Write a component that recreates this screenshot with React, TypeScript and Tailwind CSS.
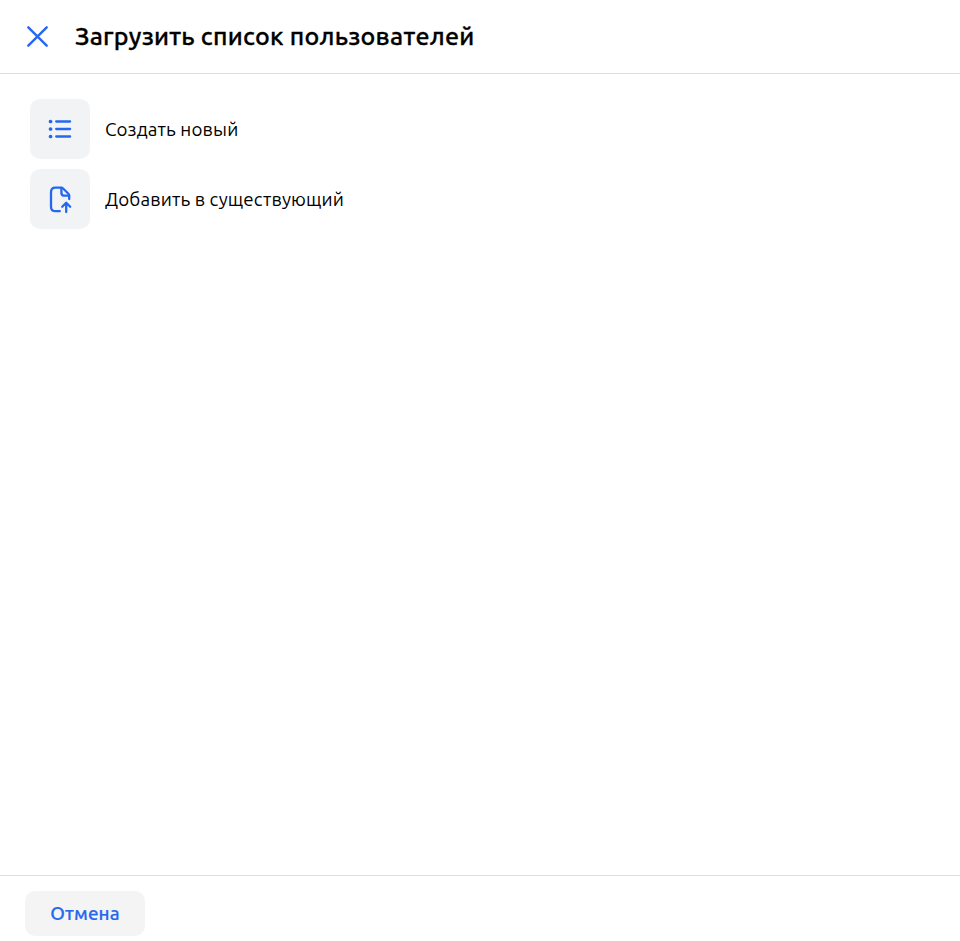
import React from "react";

export default function App() {
  return (
    <div className="flex h-screen flex-col bg-white font-['Ubuntu','Noto_Sans',sans-serif] text-black">
      <header className="flex h-[74px] shrink-0 items-center border-b border-[#dedede] pl-[25px]">
        <svg width="25" height="25" viewBox="0 0 25 25" fill="none" stroke="#2668ed" strokeWidth="2.4" strokeLinecap="round">
          <path d="M3.3 3.3l18.4 18.4M21.7 3.3L3.3 21.7" />
        </svg>
        <h1 className="ml-[25px] whitespace-nowrap text-[25px] font-medium tracking-[0.24px] [-webkit-text-stroke:0.3px_black]">
          Загрузить список пользователей
        </h1>
      </header>
      <main className="flex flex-1 flex-col gap-2.5 px-[30px] pt-[25px]">
        <button className="flex items-center gap-[15px] text-[18.75px] tracking-[0.14px]">
          <span className="flex size-[60px] items-center justify-center rounded-[10px] bg-[#f1f3f5]">
            <svg width="30" height="30" viewBox="0 0 30 30" fill="none" stroke="#2668ed" strokeWidth="2.3" strokeLinecap="round">
              <path d="M11.2 7.5h13.9M11.2 15h13.9M11.2 22.5h13.9" />
              <path d="M5.5 7.5h.1M5.5 15h.1M5.5 22.5h.1" strokeWidth="3.7" />
            </svg>
          </span>
          <span className="pt-0.5">Создать новый</span>
        </button>
        <button className="flex items-center gap-[15px] text-[18.75px] tracking-[0.14px]">
          <span className="flex size-[60px] items-center justify-center rounded-[10px] bg-[#f1f3f5]">
            <svg width="30" height="30" viewBox="0 0 30 30" fill="none" stroke="#2668ed" strokeWidth="2.3" strokeLinecap="round" strokeLinejoin="round">
              <path d="M14.8 27.2h-4.3Q6 27.2 6 22.7V8.2q0-4.5 4.5-4.5h5.6q1.2 0 2 .8l5.3 5.2q.8.8.8 2v3.4" />
              <path d="M16.4 4v4.7q0 3 3 3h4.7M21.2 28V19M17.2 22.7l4-4 4 4" />
            </svg>
          </span>
          <span className="pt-0.5">Добавить в существующий</span>
        </button>
      </main>
      <footer className="h-[66px] shrink-0 border-t border-[#dedede] pl-[25px] pt-[15px]">
        <button className="h-[45px] w-[120px] rounded-[10px] bg-[#f4f4f4] pt-px text-[18.75px] font-medium tracking-[0.14px] text-[#2668ed] [-webkit-text-stroke:0.2px_#2668ed]">Отмена</button>
      </footer>
    </div>
  );
}
